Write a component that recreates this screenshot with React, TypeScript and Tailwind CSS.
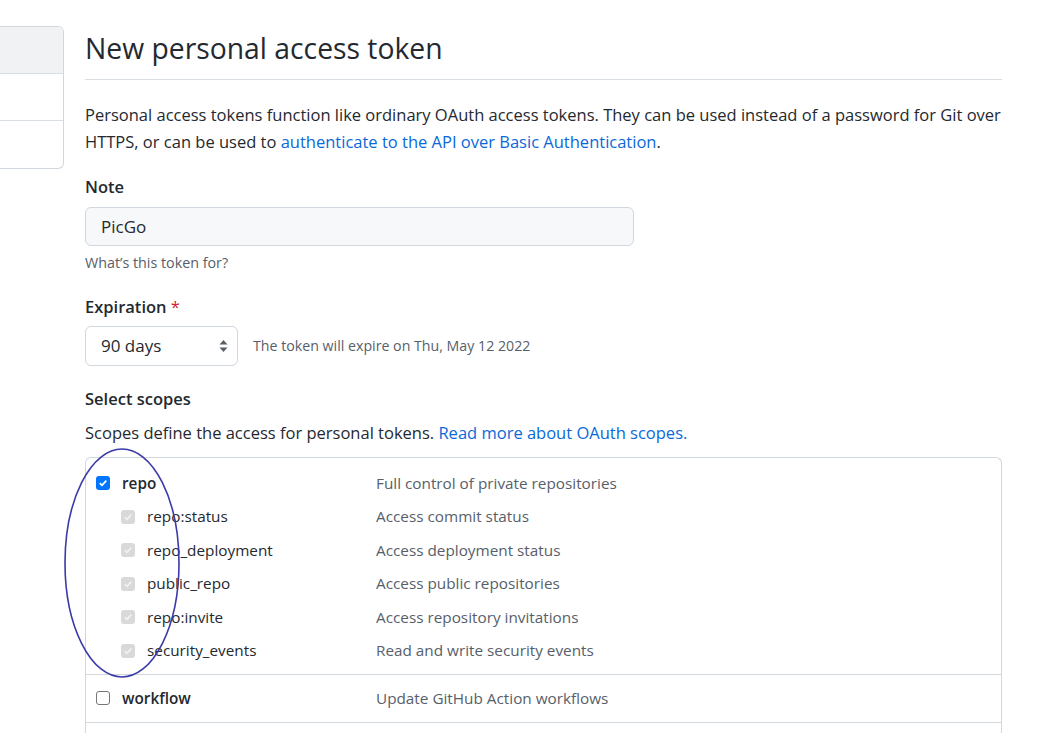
export default function App() {
  const subScopes = [
    { name: 'repo:status', desc: 'Access commit status' },
    { name: 'repo_deployment', desc: 'Access deployment status' },
    { name: 'public_repo', desc: 'Access public repositories' },
    { name: 'repo:invite', desc: 'Access repository invitations' },
    { name: 'security_events', desc: 'Read and write security events' },
  ];

  return (
    <div className="relative min-h-[733px] w-[1055px] bg-white text-[#24292f] font-['Open_Sans',sans-serif] overflow-hidden">
      <div className="flex pt-[26px]">
        {/* sidebar menu stub */}
        <div className="w-[64px] shrink-0">
          <div className="h-[143px] rounded-r-[6px] border border-l-0 border-[#d0d7de] overflow-hidden flex flex-col">
            <div className="h-[47px] bg-[#f0f2f4] border-b border-[#d8dee4]"></div>
            <div className="h-[47px] border-b border-[#d8dee4]"></div>
            <div className="flex-1"></div>
          </div>
        </div>

        <div className="ml-[21px] w-[917px]">
          <h1 className="text-[28.3px] leading-[44px] pb-[9px] border-b border-[#d8dee4] font-normal">
            New personal access token
          </h1>

          <p className="mt-[21px] text-[16.5px] leading-[27px]">
            Personal access tokens function like ordinary OAuth access tokens. They can be used instead of a password for Git over HTTPS, or can be used to{' '}
            <span className="whitespace-nowrap">
              <a className="text-[#0969da]">authenticate to the API over Basic Authentication</a>.
            </span>
          </p>

          <div className="mt-[20px] text-[16.5px] font-semibold leading-[24px]">Note</div>
          <div className="mt-[8px] w-[549px] h-[39px] bg-[#f6f8fa] border border-[#d0d7de] rounded-[6px] flex items-center px-[15px] text-[17px]">
            PicGo
          </div>
          <div className="mt-[7px] text-[14.3px] text-[#57606a] leading-[20px]">What’s this token for?</div>

          <div className="mt-[22px] text-[16.5px] font-semibold leading-[24px]">
            Expiration <span className="text-[#cf222e] font-normal">*</span>
          </div>
          <div className="mt-[7px] flex items-center">
            <div className="w-[153px] h-[40px] border border-[#d0d7de] rounded-[6px] flex items-center justify-between pl-[15px] pr-[9px] text-[17px]">
              <span>90 days</span>
              <svg width="9" height="14" viewBox="0 0 9 14">
                <path d="M4.5 1 L8.5 5.5 H0.5 Z" fill="#57606a" />
                <path d="M4.5 13 L8.5 8.5 H0.5 Z" fill="#57606a" />
              </svg>
            </div>
            <span className="ml-[15px] text-[14.2px] text-[#57606a]">The token will expire on Thu, May 12 2022</span>
          </div>

          <div className="mt-[21px] text-[16.5px] font-semibold leading-[24px]">Select scopes</div>
          <p className="mt-[10px] text-[16.5px] leading-[24px]">
            Scopes define the access for personal tokens.{' '}
            <a className="text-[#0969da]">Read more about OAuth scopes.</a>
          </p>

          <div className="mt-[12px] border border-[#d0d7de] rounded-t-[6px] border-b-0">
            <div className="pt-[13px] pb-[11px] border-b border-[#d0d7de]">
              <div className="flex items-center h-[24px]">
                <div className="w-[290px] flex items-center pl-[10px]">
                  <span className="w-[14px] h-[14px] rounded-[3px] bg-[#0075ff] flex items-center justify-center">
                    <svg width="10" height="10" viewBox="0 0 10 10">
                      <path d="M1.8 5.2 L4 7.3 L8.3 2.6" stroke="white" strokeWidth="1.8" fill="none" />
                    </svg>
                  </span>
                  <span className="ml-[12px] font-semibold text-[15.3px]">repo</span>
                </div>
                <span className="text-[15.3px] text-[#57606a]">Full control of private repositories</span>
              </div>
              {subScopes.map((s) => (
                <div key={s.name} className="flex items-center h-[24px] mt-[9.5px]">
                  <div className="w-[290px] flex items-center pl-[35px]">
                    <span className="w-[14px] h-[14px] rounded-[3px] bg-[#d9d9d9] flex items-center justify-center">
                      <svg width="10" height="10" viewBox="0 0 10 10">
                        <path d="M1.8 5.2 L4 7.3 L8.3 2.6" stroke="#f2f2f2" strokeWidth="1.6" fill="none" />
                      </svg>
                    </span>
                    <span className="ml-[12px] text-[15.3px]">{s.name}</span>
                  </div>
                  <span className="text-[15.3px] text-[#57606a]">{s.desc}</span>
                </div>
              ))}
            </div>
            <div className="h-[48px] flex items-center border-b border-[#d0d7de]">
              <div className="w-[290px] flex items-center pl-[10px]">
                <span className="w-[14px] h-[14px] rounded-[3px] border border-[#767676] bg-white"></span>
                <span className="ml-[12px] font-semibold text-[15.3px]">workflow</span>
              </div>
              <span className="text-[15.3px] text-[#57606a]">Update GitHub Action workflows</span>
            </div>
            <div className="h-[30px]"></div>
          </div>
        </div>
      </div>

      {/* hand-drawn annotation ellipse */}
      <svg className="absolute left-0 top-0 pointer-events-none" width="1055" height="733">
        <ellipse cx="122" cy="563" rx="57" ry="114" fill="none" stroke="#3a3aa8" strokeWidth="1.6" />
      </svg>
    </div>
  );
}
